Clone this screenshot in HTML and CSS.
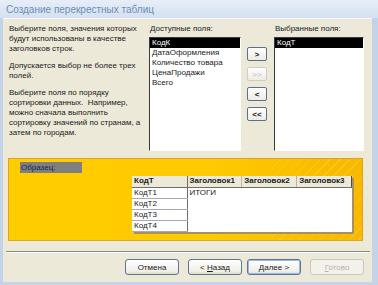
FILE: index.html
```html
<!DOCTYPE html>
<html lang="ru">
<head>
    <meta charset="UTF-8">
    <title>Создание перекрестных таблиц</title>
    <link rel="stylesheet" href="styles.css">
</head>
<body>
    <div class="window">
        <div class="titlebar">Создание перекрестных таблиц</div>
        <div class="content">
            <div class="top">
                <div class="hints">
                    <p>Выберите поля, значения которых<br>будут использованы в качестве<br>заголовков строк.</p>
                    <p>Допускается выбор не более трех<br>полей.</p>
                    <p>Выберите поля по порядку<br>сортировки данных.&nbsp; Например,<br>можно сначала выполнить<br>сортировку значений по странам, а<br>затем по городам.</p>
                </div>
                <div class="field-col">
                    <div class="label">Доступные поля:</div>
                    <ul class="list">
                        <li class="selected">КодК</li>
                        <li>ДатаОформления</li>
                        <li>Количество товара</li>
                        <li>ЦенаПродажи</li>
                        <li>Всего</li>
                    </ul>
                </div>
                <div class="move-buttons">
                    <button class="move">&gt;</button>
                    <button class="move disabled">&gt;&gt;</button>
                    <button class="move">&lt;</button>
                    <button class="move">&lt;&lt;</button>
                </div>
                <div class="field-col right">
                    <div class="label">Выбранные поля:</div>
                    <ul class="list">
                        <li class="selected">КодТ</li>
                    </ul>
                </div>
            </div>

            <div class="sample">
                <div class="sample-label">Образец:</div>
                <table class="preview">
                    <tr>
                        <th class="rowhead">КодТ</th>
                        <th>Заголовок1</th>
                        <th>Заголовок2</th>
                        <th class="last">Заголовок3</th>
                    </tr>
                    <tr>
                        <td class="rowhead">КодТ1</td>
                        <td>ИТОГИ</td>
                        <td></td>
                        <td></td>
                    </tr>
                    <tr>
                        <td class="rowhead">КодТ2</td>
                        <td></td>
                        <td></td>
                        <td></td>
                    </tr>
                    <tr>
                        <td class="rowhead">КодТ3</td>
                        <td></td>
                        <td></td>
                        <td></td>
                    </tr>
                    <tr>
                        <td class="rowhead">КодТ4</td>
                        <td></td>
                        <td></td>
                        <td></td>
                    </tr>
                </table>
            </div>

            <div class="separator"></div>

            <div class="footer">
                <button class="btn">Отмена</button>
                <button class="btn back">&lt; <u>Н</u>азад</button>
                <button class="btn next"><u>Д</u>алее &gt;</button>
                <button class="btn disabled"><u>Г</u>отово</button>
            </div>
        </div>
    </div>
</body>
</html>
```

FILE: styles.css
```css
* {
    margin: 0;
    padding: 0;
    box-sizing: border-box;
}

body {
    width: 378px;
    height: 285px;
    overflow: hidden;
    background: #c4d3e7;
    font-family: "Liberation Sans", Arial, sans-serif;
    font-size: 8px;
    color: #1a1a1a;
}

.window {
    width: 378px;
    height: 285px;
    display: flex;
    flex-direction: column;
    background: #c4d3e7;
}

.titlebar {
    height: 18px;
    padding-left: 6px;
    line-height: 19px;
    font-size: 10px;
    color: #6d8db6;
    background: linear-gradient(to bottom, #e6eef8, #d5e1f1);
}

.content {
    flex: 1;
    margin: 0 6px 3px 3px;
    background: #ece9d8;
    border-top: 1px solid #f6f8fb;
    display: flex;
    flex-direction: column;
}

/* top part: hints + field lists */
.top {
    display: flex;
    padding: 5px 0 0 6px;
    height: 133px;
}

.hints {
    width: 140px;
    line-height: 10px;
}

.hints p {
    margin-bottom: 7px;
}

.field-col {
    width: 92px;
}

.field-col.right {
    width: 90px;
    margin-left: 7px;
}

.label {
    height: 13px;
    line-height: 10px;
    padding-left: 1px;
}

.list {
    list-style: none;
    height: 114px;
    background: #fff;
    border: 1px solid;
    border-color: #3a3a3a #fff #fff #3a3a3a;
}

.list li {
    height: 10px;
    line-height: 10px;
    padding-left: 2px;
}

.list li.selected {
    background: #000;
    color: #fff;
}

.move-buttons {
    width: 20px;
    margin: 23px 0 0 6px;
    display: flex;
    flex-direction: column;
    gap: 6px;
}

button {
    font-family: "Liberation Sans", Arial, sans-serif;
    font-size: 8px;
    color: #1a1a1a;
    cursor: pointer;
}

.move {
    width: 20px;
    height: 14px;
    border: 1px solid #5b708a;
    border-radius: 2px;
    background: linear-gradient(to bottom, #ffffff, #ecebe4);
    font-weight: bold;
}

.move.disabled {
    border-color: #cfcdc2;
    color: #c2c0b4;
    font-weight: normal;
}

/* sample panel */
.sample {
    margin: 6px 0 0 5px;
    width: 355px;
    height: 83px;
    border: 1px solid #d6a23a;
    box-shadow: 0 0 0 1px #f4e7c2;
    background:
        repeating-linear-gradient(135deg, rgba(255, 255, 255, 0) 0 6px, rgba(255, 240, 170, 0.18) 6px 7px),
        linear-gradient(to right, #ffcc00 0%, #ffcb00 55%, #f8b800 100%);
    background-size: 90px 100%, 100% 100%;
    background-position: right top, 0 0;
    background-repeat: no-repeat;
    padding: 3px 10px 0 11px;
    display: flex;
    flex-direction: column;
}

.sample-label {
    width: 62px;
    height: 11px;
    line-height: 11px;
    padding-left: 1px;
    background: #7f7f7f;
    color: #1c2550;
}

.preview {
    margin: 3px 0 0 auto;
    width: 220px;
    border-collapse: collapse;
    background: #fff;
    box-shadow: 2px 2px 0 #a8925c;
    table-layout: fixed;
}

.preview th,
.preview td {
    height: 11px;
    line-height: 10px;
    padding: 0 0 0 2px;
    text-align: left;
    font-weight: normal;
    white-space: nowrap;
    overflow: hidden;
}

.preview th {
    background: #ece9d8;
    font-weight: bold;
    border-right: 1px solid #b9b5a5;
    border-bottom: 1px solid #6f6d66;
}

.preview th.rowhead {
    width: 55px;
    border-right: 1px solid #6f6d66;
}

.preview th.last {
    border-right: 1px solid #4e4c46;
}

.preview td.rowhead {
    border-bottom: 1px solid #a6aab6;
    border-right: 1px solid #6f6d66;
}

/* bottom */
.separator {
    margin: 10px 2px 0 3px;
    border-top: 1px solid #8a8878;
    border-bottom: 1px solid #fff;
}

.footer {
    display: flex;
    justify-content: flex-end;
    padding: 6px 8px 0 0;
}

.btn {
    width: 54px;
    height: 16px;
    border: 1px solid #5d7591;
    border-radius: 3px;
    background: linear-gradient(to bottom, #ffffff, #f0efe8 80%, #dcdad0);
}

.btn + .btn {
    margin-left: 9px;
}

.btn.next {
    margin-left: 5px;
    box-shadow: inset 0 0 0 1px #9cb8ea;
}

.btn.disabled {
    border-color: #cbc9be;
    color: #b6b4a6;
    background: #f2f1ea;
}
```
